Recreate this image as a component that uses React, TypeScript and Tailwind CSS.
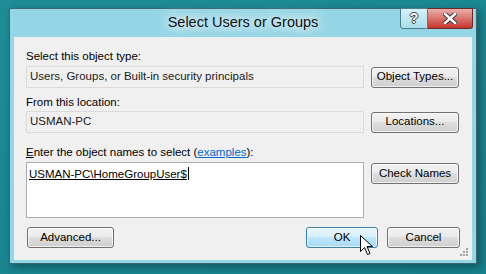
import type { ReactNode } from 'react'

const font = "font-['Liberation_Sans',Arial,sans-serif]"

function Button({
  children,
  hot = false,
  width = 'w-[88px]',
  className = '',
}: {
  children: ReactNode
  hot?: boolean
  width?: string
  className?: string
}) {
  return (
    <div
      className={`flex h-[21px] ${width} items-center justify-center rounded-[3px] border text-[11.5px] text-black ${
        hot
          ? 'border-[#3c7fb1] bg-[linear-gradient(#eaf6fd_0%,#d9f0fc_45%,#bee6fd_50%,#a7d9f5_100%)]'
          : 'border-[#707070] bg-[linear-gradient(#f2f2f2_0%,#ebebeb_45%,#dddddd_50%,#cfcfcf_100%)]'
      } shadow-[inset_0_0_0_1px_rgba(255,255,255,0.7)] ${className}`}
    >
      {children}
    </div>
  )
}

function Cursor() {
  return (
    <svg
      className="pointer-events-none absolute left-[54px] top-[8px]"
      width="13"
      height="20"
      viewBox="0 0 13 20"
    >
      <path
        d="M0.5 0.5 L0.5 16.5 L4.5 12.5 L7.5 19.5 L10 18.5 L7 11.5 L12.5 11.5 Z"
        fill="#fff"
        stroke="#000"
        strokeWidth="1"
        strokeLinejoin="miter"
      />
    </svg>
  )
}

function Grip() {
  const dots = [
    [6, 0],
    [3, 3],
    [6, 3],
    [0, 6],
    [3, 6],
    [6, 6],
  ]
  return (
    <svg className="absolute bottom-[3px] right-[3px]" width="9" height="9">
      {dots.map(([x, y]) => (
        <g key={`${x}-${y}`}>
          <rect x={x + 1} y={y + 1} width="2" height="2" fill="#fff" />
          <rect x={x} y={y} width="2" height="2" fill="#a0a0a0" />
        </g>
      ))}
    </svg>
  )
}

export default function App() {
  return (
    <div
      className={`h-[274px] w-[486px] overflow-hidden bg-[linear-gradient(160deg,#1f8d97_0%,#1a858f_60%,#17808a_100%)] pl-[9px] pt-[8px] ${font}`}
    >
      <div className="flex h-[256px] w-[468px] flex-col border border-[#3a6672] bg-[#94d6e6] shadow-[3px_3px_8px_rgba(0,0,0,0.35)]">
        {/* title bar */}
        <div className="relative flex h-[28px] shrink-0 items-center justify-center">
          <span className="text-[14.5px] text-[#111] [text-shadow:0_0_8px_#fff,0_0_14px_#fff,0_0_20px_#e8f8fc]">
            Select Users or Groups
          </span>
          <div className="absolute right-[3px] top-[-1px] flex h-[21px]">
            <div className="flex w-[28px] items-center justify-center rounded-bl-[3px] border border-[#4f7f8c] bg-[linear-gradient(#d6f2f8,#a8deeb)] text-[14px] font-bold text-white [text-shadow:0_0_1px_#333,1px_0_0_#444,-1px_0_0_#444,0_1px_0_#444,0_-1px_0_#444]">
              ?
            </div>
            <div className="flex w-[45px] items-center justify-center rounded-br-[3px] border border-l-0 border-[#6b2a26] bg-[linear-gradient(#eab0ab_0%,#d9736c_50%,#c6342c_100%)]">
              <svg width="14" height="11" viewBox="0 0 14 11">
                <path
                  d="M2 1 L12 10 M12 1 L2 10"
                  stroke="#3b3b3b"
                  strokeWidth="4.5"
                  strokeLinecap="square"
                />
                <path
                  d="M2 1 L12 10 M12 1 L2 10"
                  stroke="#fff"
                  strokeWidth="2.5"
                  strokeLinecap="square"
                />
              </svg>
            </div>
          </div>
        </div>

        {/* content */}
        <div className="relative mx-[4px] mb-[3px] flex-1 bg-[#f0f0f0] px-[12px] pt-[12px] text-[11.5px] text-black">
          <div className="h-[15px] leading-[15px]">Select this object type:</div>
          <div className="mt-[2px] flex items-center gap-[7px]">
            <div className="flex h-[22px] w-[338px] items-center border border-[#dadada] pl-[3px] text-[#1a1a1a]">
              Users, Groups, or Built-in security principals
            </div>
            <Button>Object Types...</Button>
          </div>

          <div className="mt-[7px] h-[15px] leading-[15px]">From this location:</div>
          <div className="mt-[1px] flex items-center gap-[7px]">
            <div className="flex h-[22px] w-[338px] items-center border border-[#dadada] pl-[3px] text-[#1a1a1a]">
              USMAN-PC
            </div>
            <Button>Locations...</Button>
          </div>

          <div className="mt-[12px] h-[15px] leading-[15px]">
            <span className="underline">E</span>nter the object names to select (
            <span className="text-[#0066cc] underline">examples</span>):
          </div>
          <div className="mt-[2px] flex items-start gap-[7px]">
            <div className="h-[56px] w-[338px] border border-[#abadb3] bg-white pl-[2px] pt-[2px]">
              <span className="underline">USMAN-PC\HomeGroupUser$</span>
              <span className="ml-[1px] inline-block h-[13px] w-px translate-y-[2px] bg-black" />
            </div>
            <Button className="mt-[1px]">Check Names</Button>
          </div>

          <div className="mt-[9px] flex items-center">
            <Button width="w-[87px]" className="ml-[1px]">
              Advanced...
            </Button>
            <div className="ml-auto flex gap-[9px]">
              <div className="relative">
                <Button hot width="w-[72px]">
                  OK
                </Button>
                <Cursor />
              </div>
              <Button width="w-[73px]">Cancel</Button>
            </div>
          </div>
          <Grip />
        </div>
      </div>
    </div>
  )
}
